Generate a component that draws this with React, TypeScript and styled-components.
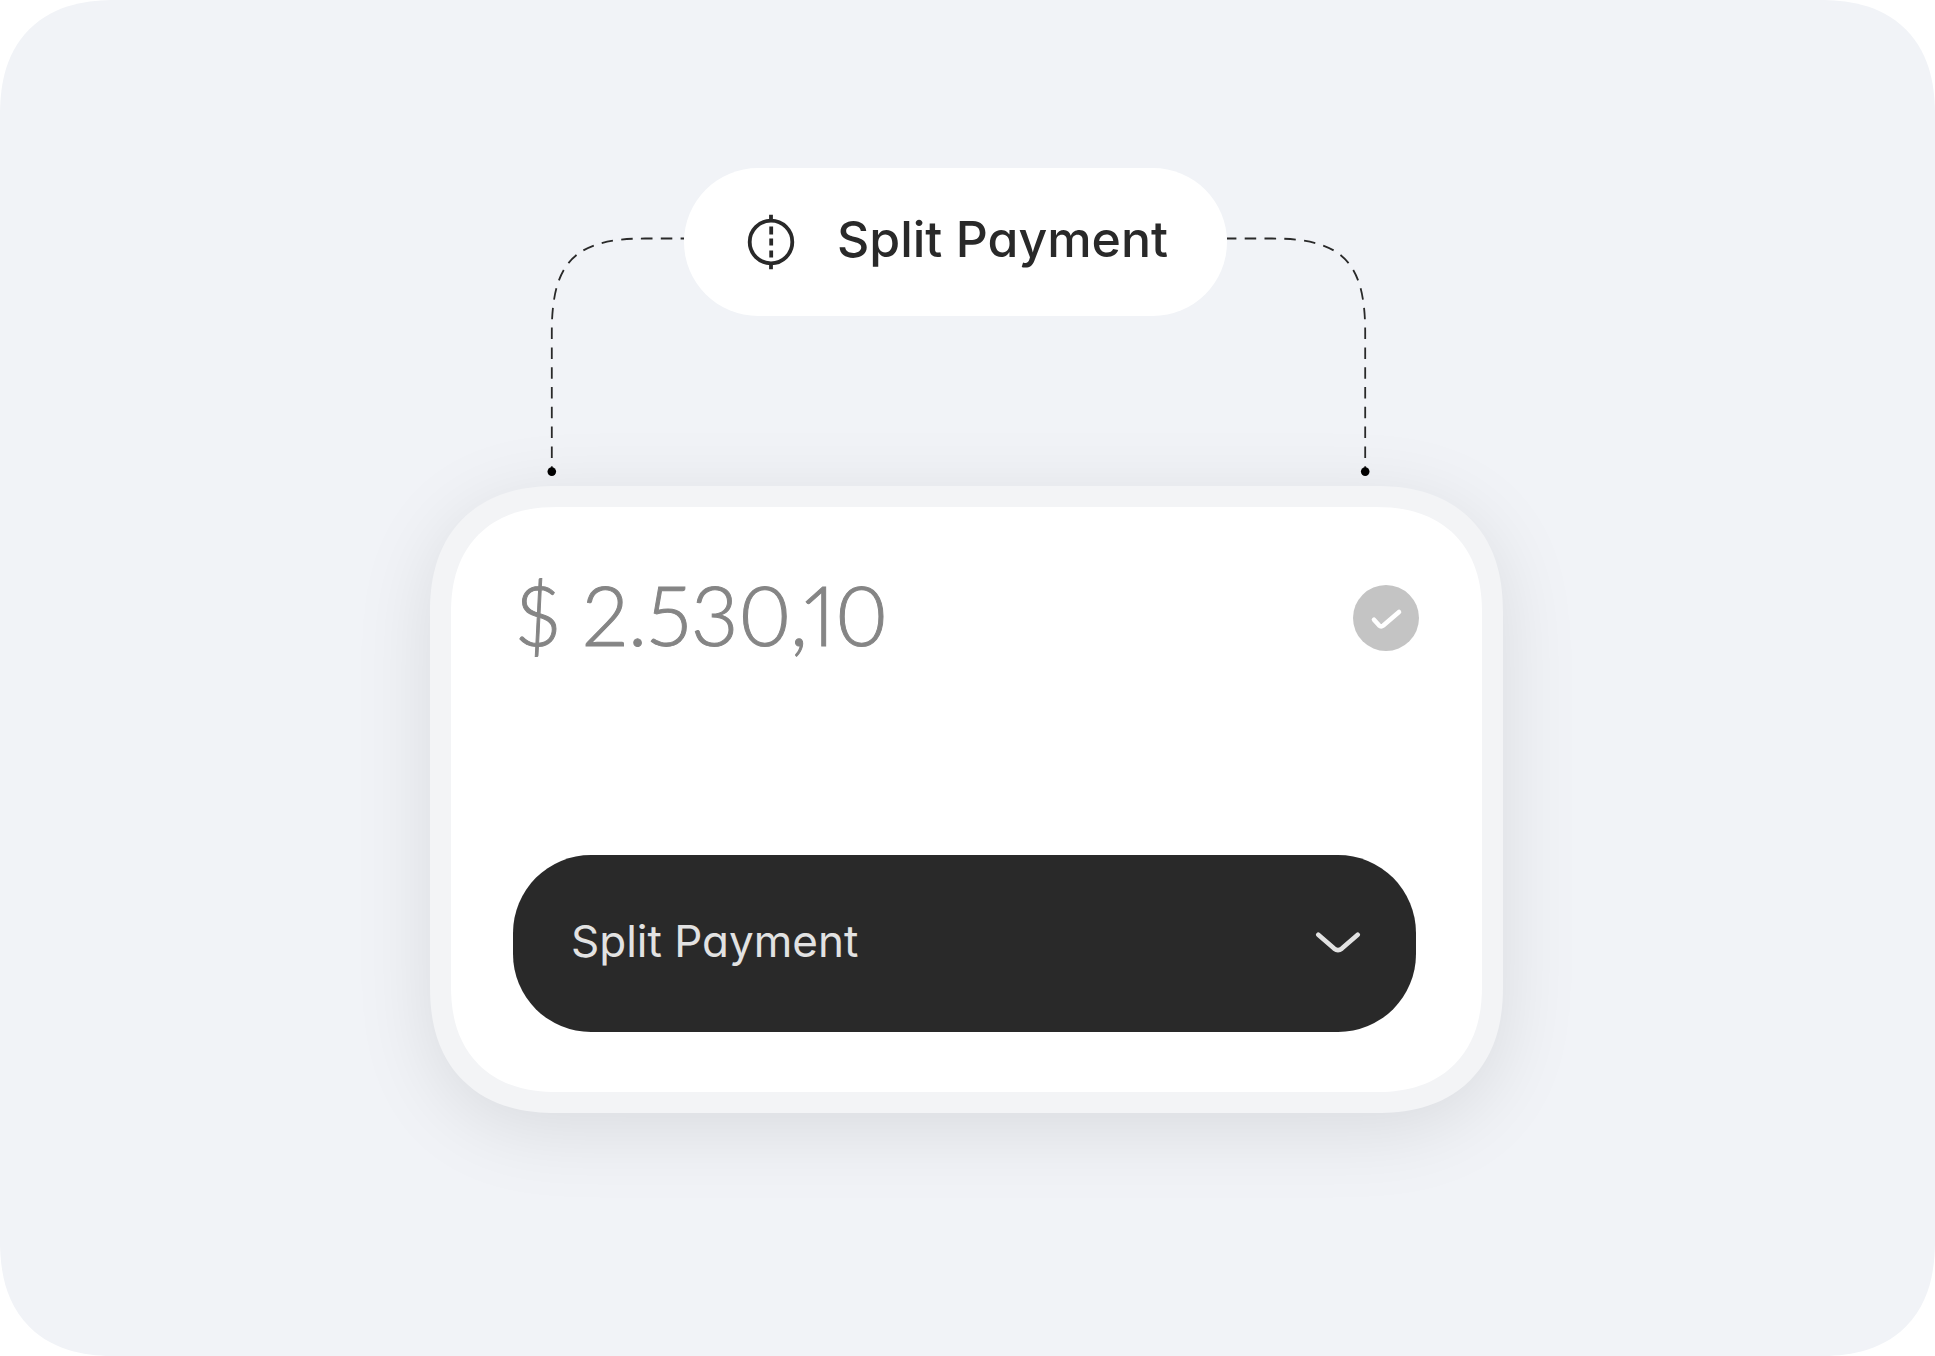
import React, { useState } from "react";
import styled, { createGlobalStyle } from "styled-components";

const GlobalStyle = createGlobalStyle`
  * { box-sizing: border-box; }
  body { margin: 0; background: #ffffff; font-family: Inter, "Liberation Sans", sans-serif; }
`;

const Stage = styled.main`
  display: flex;
  flex-direction: column;
  align-items: center;
  min-height: 100vh;
  padding: 168px 26px 168px 24px;
  background: #f1f3f7;
  border-radius: 92px;
  @supports (corner-shape: squircle) {
    border-radius: 116px;
    corner-shape: superellipse(1.25);
  }
`;

const Figure = styled.section`
  width: 100%;
  max-width: 1073px;
`;

const BranchRow = styled.div`
  display: flex;
  align-items: flex-start;
  padding: 0 133px 0 117px;
  margin-bottom: 9px;
`;

const Branch = styled.svg`
  flex: none;
  margin-top: 66px;
`;

const Badge = styled.div`
  display: flex;
  flex: 1;
  align-items: center;
  justify-content: center;
  gap: 42px;
  height: 148px;
  padding-left: 4px;
  border-radius: 74px;
  background: #ffffff;
  color: #292929;
  font-size: 50px;
  font-weight: 450;
  line-height: 60px;
  white-space: nowrap;
  font-feature-settings: "cv11" 1;
`;

const BadgeLabel = styled.span`
  padding-bottom: 6px;
`;

const Frame = styled.div`
  padding: 21px;
  background: #f3f4f6;
  border-radius: 108px;
  box-shadow: 0 16px 80px rgba(0, 0, 0, 0.1);
  @supports (corner-shape: squircle) {
    border-radius: 126px;
    corner-shape: superellipse(1.2);
  }
`;

const Card = styled.div`
  display: flex;
  flex-direction: column;
  justify-content: space-between;
  min-height: 585px;
  padding: 66px 63px 60px 62px;
  background: #ffffff;
  border-radius: 92px;
  @supports (corner-shape: squircle) {
    border-radius: 106px;
    corner-shape: superellipse(1.2);
  }
`;

const AmountRow = styled.div`
  display: flex;
  align-items: center;
  justify-content: space-between;
`;

const Amount = styled.p`
  margin: 0;
  padding: 0 0 8px 3px;
  color: #858585;
  font-family: Lato, Inter, sans-serif;
  font-size: 82px;
  font-weight: 300;
  line-height: 82px;
  font-feature-settings: "pnum" 1, "lnum" 1;
  -webkit-text-stroke: 1px #858585;
`;

const Stack = styled.div`
  display: grid;
  align-items: center;
  > * { grid-area: 1 / 1; }
  > svg { pointer-events: none; }
`;

const MethodField = styled(Stack)`
  margin-right: 3px;
`;

const Confirm = styled.input`
  appearance: none;
  width: 66px;
  height: 66px;
  margin: 0;
  border-radius: 50%;
  background: #c4c4c4;
`;

const Method = styled.select`
  appearance: none;
  width: 100%;
  height: 177px;
  padding: 0 120px 6px 58px;
  border: 0;
  border-radius: 78px;
  background: #292929;
  color: #e2e2e2;
  font-family: Inter, sans-serif;
  font-size: 44px;
  font-weight: 400;
  font-feature-settings: "cv11" 1;
`;

const Chevron = styled.svg`
  justify-self: end;
  margin-right: 54px;
`;

function Connector({ side }: { side: "left" | "right" }) {
  const width = side === "left" ? 137 : 143;
  return (
    <Branch width={width} height="243" viewBox={`0 0 ${width} 243`} fill="none" aria-hidden="true">
      <g transform={side === "right" ? "translate(143 0) scale(-1 1)" : undefined}>
        <path
          d="M4.8 237.5V98C4.8 28 28 4.5 98 4.5H143"
          stroke="#292929"
          strokeWidth="1.8"
          strokeDasharray="11.5 8.3"
          strokeDashoffset="6.2"
        />
        <circle cx="4.8" cy="237.6" r="4.3" fill="#000000" />
      </g>
    </Branch>
  );
}

function SplitIcon() {
  return (
    <svg width="48" height="56" viewBox="0 0 48 56" fill="none" stroke="currentColor" strokeWidth="3.8" aria-hidden="true">
      <circle cx="24" cy="28" r="21.3" />
      <path d="M24 .8v5.5M24 49.7v5.5M24.2 12.5v8M24.2 24.5v7M24.2 36.5v7" />
    </svg>
  );
}

export default function App() {
  const [confirmed, setConfirmed] = useState(true);
  return (
    <>
      <GlobalStyle />
      <Stage>
        <Figure>
          <BranchRow>
            <Connector side="left" />
            <Badge>
              <SplitIcon />
              <BadgeLabel>Split Payment</BadgeLabel>
            </Badge>
            <Connector side="right" />
          </BranchRow>
          <Frame>
            <Card>
              <AmountRow>
                <Amount>$ 2.530,10</Amount>
                <Stack>
                  <Confirm
                    type="checkbox"
                    aria-label="Confirm amount"
                    checked={confirmed}
                    onChange={(e) => setConfirmed(e.target.checked)}
                  />
                  {confirmed && (
                    <svg width="66" height="66" viewBox="0 0 66 66" fill="none" aria-hidden="true">
                      <path
                        d="M21 34.8l5 5.5q2 2 4.3.2L46 27"
                        stroke="#ffffff"
                        strokeWidth="4.6"
                        strokeLinecap="round"
                        strokeLinejoin="round"
                      />
                    </svg>
                  )}
                </Stack>
              </AmountRow>
              <MethodField>
                <Method aria-label="Payment method" defaultValue="split">
                  <option value="split">Split Payment</option>
                </Method>
                <Chevron width="48" height="24" viewBox="0 0 48 24" fill="none" aria-hidden="true">
                  <path
                    d="M4.3 2.8l15.9 13.8q3.8 3 7.6 0L43.7 2.8"
                    stroke="#e2e2e2"
                    strokeWidth="4.6"
                    strokeLinecap="round"
                    strokeLinejoin="round"
                  />
                </Chevron>
              </MethodField>
            </Card>
          </Frame>
        </Figure>
      </Stage>
    </>
  );
}
